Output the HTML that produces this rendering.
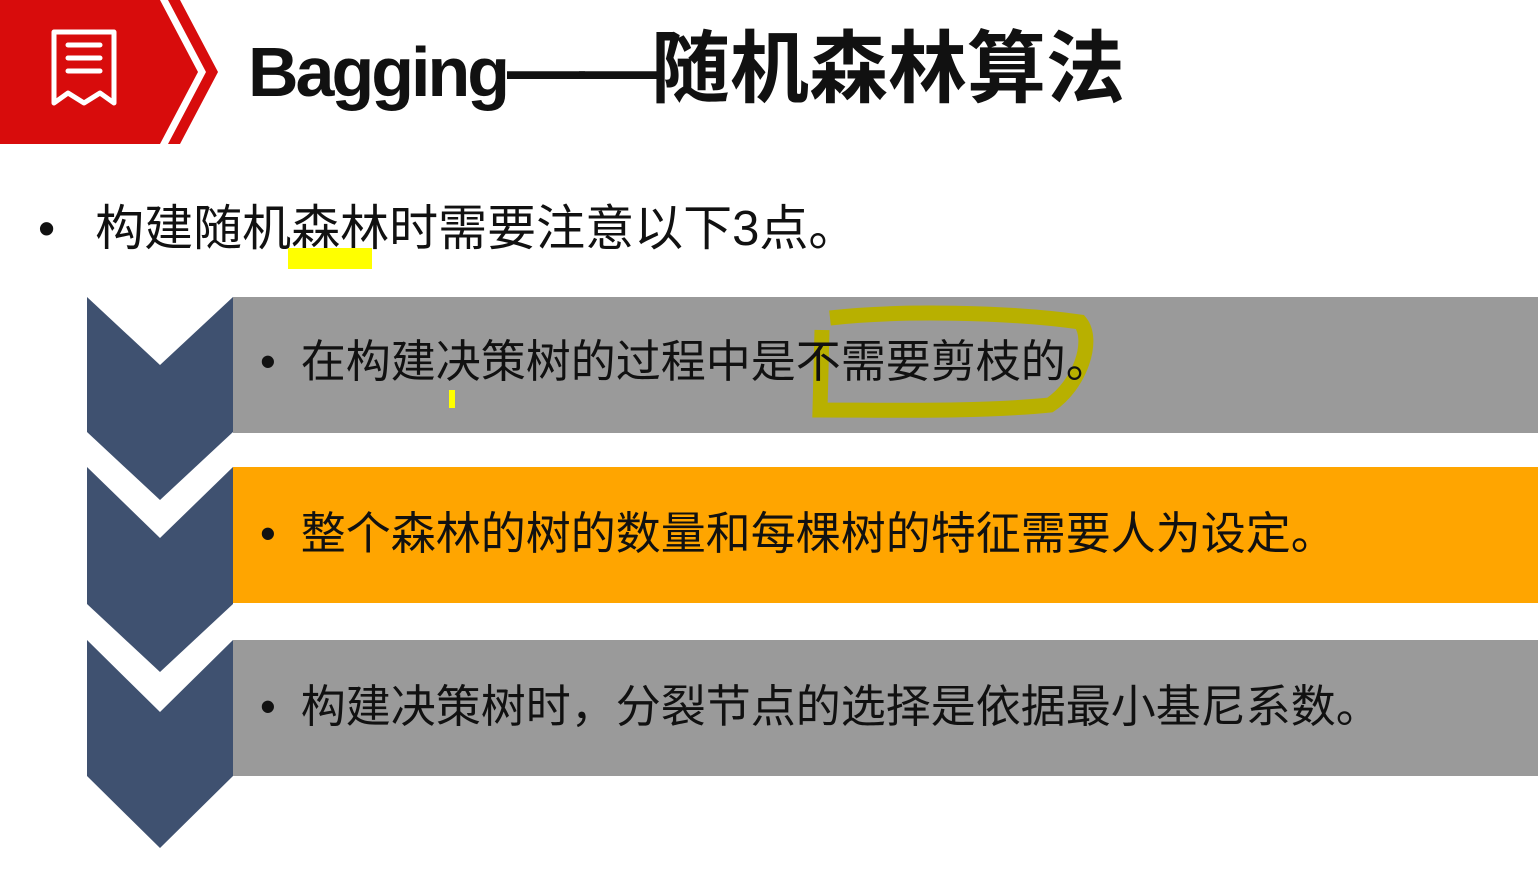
<!DOCTYPE html>
<html><head><meta charset="utf-8"><style>
body{margin:0;width:1538px;height:881px;background:#fff;position:relative;overflow:hidden;font-family:"Liberation Sans","Noto Sans CJK SC",sans-serif;}
.t{position:absolute;white-space:nowrap;color:#111;}
.band{position:absolute;left:233px;right:0;height:136px;}
</style></head><body>
<svg style="position:absolute;left:0;top:0" width="230" height="150">
<polygon points="0,0 160,0 198,72 160,144 0,144" fill="#d80c0c"/>
<polygon points="168,0 180,0 218,72 180,144 168,144 206,72" fill="#d80c0c"/>
<path d="M54,32 H114 V103 L100,93 L84,103 L68,93 L54,103 Z" fill="none" stroke="#fff" stroke-width="5" stroke-linejoin="round"/>
<line x1="68" y1="45" x2="100" y2="45" stroke="#fff" stroke-width="5" stroke-linecap="round"/>
<line x1="68" y1="58" x2="100" y2="58" stroke="#fff" stroke-width="5" stroke-linecap="round"/>
<line x1="68" y1="71" x2="100" y2="71" stroke="#fff" stroke-width="5" stroke-linecap="round"/>
</svg>
<div class="t" style="left:248px;top:4px;font-weight:bold;"><span style="font-size:70px;letter-spacing:-3px">Bagging</span><span style="font-size:78px;letter-spacing:-6px">——</span><span style="font-size:79px">随机森林算法</span></div>
<div class="t" style="left:38px;top:189px;font-size:49px;">•<span style="display:inline-block;width:40px"></span>构建随机森林时需要注意以下3点。</div>
<div style="position:absolute;left:288px;top:248px;width:84px;height:21px;background:#ffff00"></div>
<div class="band" style="top:297px;background:#9a9a9a"></div>
<div class="band" style="top:467px;background:#ffa500"></div>
<div class="band" style="top:640px;background:#9a9a9a"></div>
<svg style="position:absolute;left:0;top:0" width="240" height="881">
<g fill="#3f5170">
<polygon points="87,297 160,365 233,297 233,432 160,500 87,432"/>
<polygon points="87,467 160,538 233,467 233,604 160,672 87,604"/>
<polygon points="87,640 160,712 233,640 233,776 160,848 87,776"/>
</g></svg>
<svg style="position:absolute;left:0;top:0" width="1538" height="881">
<path d="M830,318 C900,310 1010,312 1080,322 C1095,340 1080,385 1050,405 C980,412 890,410 820,410 L822,330" fill="none" stroke="#b8b000" stroke-width="15"/>
<rect x="449" y="390" width="6" height="18" fill="#ffff00"/>
</svg>
<div class="t" style="left:260px;top:325px;font-size:45px;">•&nbsp; 在构建决策树的过程中是不需要剪枝的。</div>
<div class="t" style="left:260px;top:497px;font-size:45px;">•&nbsp; 整个森林的树的数量和每棵树的特征需要人为设定。</div>
<div class="t" style="left:260px;top:670px;font-size:45px;">•&nbsp; 构建决策树时，分裂节点的选择是依据最小基尼系数。</div>
</body></html>
